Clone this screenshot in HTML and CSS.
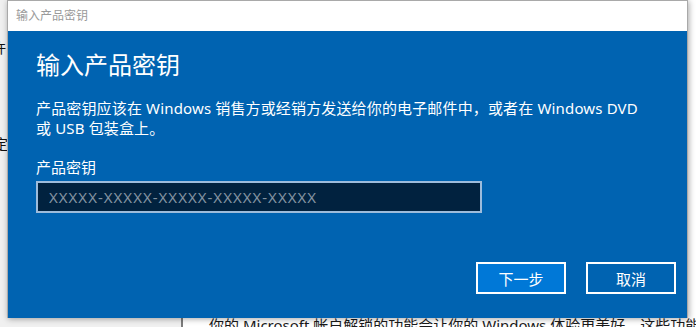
FILE: index.html
```html
<!DOCTYPE html>
<html lang="zh-CN">
<head>
<meta charset="utf-8">
<title>输入产品密钥</title>
<link rel="stylesheet" href="styles.css">
</head>
<body>
<div class="page">
  <aside class="sidebar">
    <p class="side-line side-line-1">允许</p>
    <p class="side-line side-line-2">设定中</p>
  </aside>
  <main class="content">
    <p class="content-text">你的 Microsoft 帐户解锁的功能会让你的 Windows 体验更美好。这些功能包括在所有设备上同步设置</p>
  </main>
</div>

<div class="dialog">
  <div class="titlebar">输入产品密钥</div>
  <div class="dialog-body">
    <h1 class="dialog-heading">输入产品密钥</h1>
    <p class="dialog-text">产品密钥应该在 Windows 销售方或经销方发送给你的电子邮件中，或者在 Windows DVD<br>或 USB 包装盒上。</p>
    <label class="field-label" for="key">产品密钥</label>
    <input class="key-input" id="key" type="text" placeholder="XXXXX-XXXXX-XXXXX-XXXXX-XXXXX">
    <div class="actions">
      <button class="btn btn-primary" type="button">下一步</button>
      <button class="btn" type="button">取消</button>
    </div>
  </div>
</div>
</body>
</html>
```

FILE: styles.css
```css
* {
  box-sizing: border-box;
}

html, body {
  margin: 0;
  padding: 0;
  width: 696px;
  height: 327px;
  overflow: hidden;
}

body {
  position: relative;
  font-family: "Noto Sans", "Noto Sans CJK SC", sans-serif;
  background: #ffffff;
}

.page {
  display: grid;
  grid-template-columns: 183px 1fr;
  height: 327px;
}

.sidebar {
  background: #f0f0f0;
  border-right: 2px solid #7c7c7c;
  padding-top: 38px;
  overflow: hidden;
}

.side-line {
  margin: 0;
  font-size: 14px;
  line-height: 20px;
  color: #111;
  white-space: nowrap;
  margin-left: -22px;
}

.side-line-2 {
  margin-top: 76px;
  margin-left: -20px;
}

.content {
  padding: 315px 0 0 26px;
  overflow: hidden;
}

.content-text {
  margin: 0;
  font-size: 15px;
  line-height: 20px;
  color: #1a1a1a;
  white-space: nowrap;
}

/* Dialog window laid over the page */
.dialog {
  position: absolute;
  left: 7px;
  top: 0;
  width: 681px;
  height: 318px;
  display: flex;
  flex-direction: column;
  border: 1px solid #a9a9a9;
  border-bottom: none;
  box-shadow: 1px 1px 6px rgba(0, 0, 0, 0.35);
  background: #0063b1;
}

.titlebar {
  height: 30px;
  flex: none;
  background: #ffffff;
  color: #9a9a9a;
  font-size: 12px;
  line-height: 30px;
  padding-left: 8px;
}

.dialog-body {
  flex: 1;
  display: flex;
  flex-direction: column;
  align-items: flex-start;
  padding: 18px 11px 24px 28px;
  color: #ffffff;
}

.dialog-heading {
  margin: 0;
  font-size: 24px;
  font-weight: 400;
  line-height: 32px;
}

.dialog-text {
  margin: 17px 0 0;
  font-size: 15px;
  line-height: 20px;
  white-space: nowrap;
  letter-spacing: 0.15px;
}

.field-label {
  margin-top: 19px;
  font-size: 15px;
  line-height: 20px;
}

.key-input {
  margin-top: 4px;
  width: 446px;
  height: 32px;
  border: 2px solid #9dbcdc;
  background: #01223f;
  color: #ffffff;
  font-family: "Noto Sans", "Noto Sans CJK SC", sans-serif;
  font-size: 15px;
  letter-spacing: 1px;
  padding: 0 0 1px 11px;
  outline: none;
}

.key-input::placeholder {
  color: #8393a1;
}

.actions {
  margin-top: auto;
  align-self: flex-end;
  display: flex;
  gap: 20px;
}

.btn {
  width: 90px;
  height: 32px;
  border: 2px solid #ffffff;
  background: transparent;
  color: #ffffff;
  font-family: "Noto Sans", "Noto Sans CJK SC", sans-serif;
  font-size: 15px;
  padding: 0;
}

.btn-primary {
  background: #0078d7;
}
```
